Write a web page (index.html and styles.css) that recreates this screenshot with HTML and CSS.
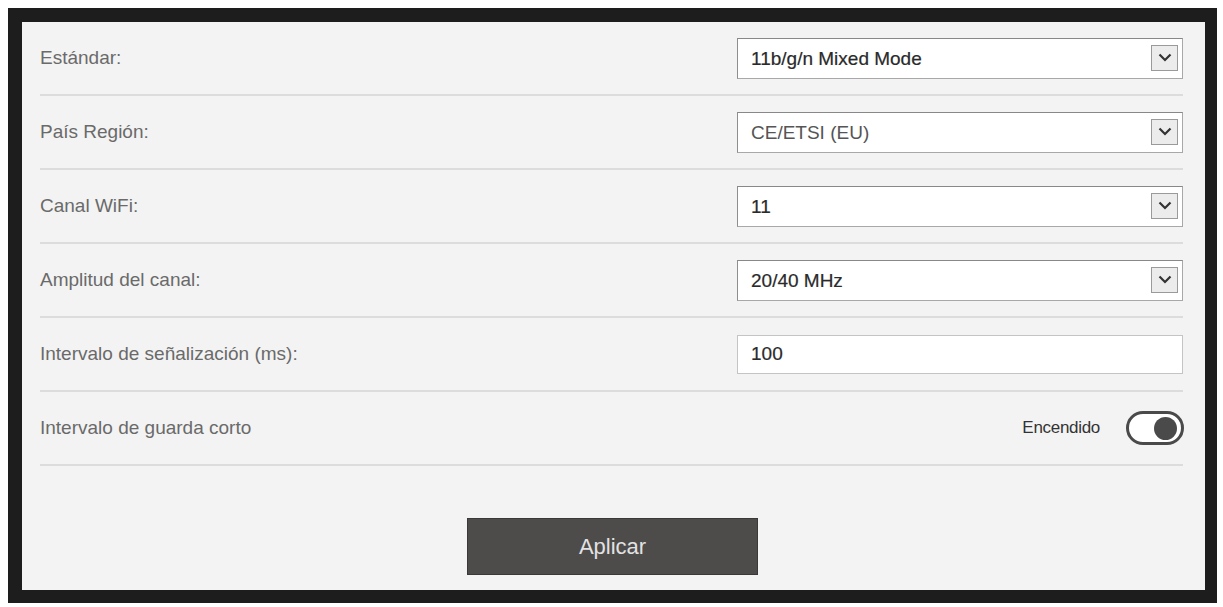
FILE: index.html
```html
<!DOCTYPE html>
<html lang="es">
<head>
    <meta charset="UTF-8">
    <meta name="viewport" content="width=device-width, initial-scale=1.0" />
    <title>Configuración WiFi</title>
    <link rel="stylesheet" href="styles.css">
</head>
<body>
    <main class="frame">
        <form class="panel">
            <div class="row">
                <label for="standard">Estándar:</label>
                <div class="select">
                    <select id="standard" class="strong">
                        <option>11b/g/n Mixed Mode</option>
                    </select>
                    <span class="arrow"><svg width="14" height="9" viewBox="0 0 14 9"><path d="M1.5 1.5 L7 7 L12.5 1.5" fill="none" stroke="#333" stroke-width="2.2"/></svg></span>
                </div>
            </div>
            <div class="row">
                <label for="region">País Región:</label>
                <div class="select">
                    <select id="region">
                        <option>CE/ETSI (EU)</option>
                    </select>
                    <span class="arrow"><svg width="14" height="9" viewBox="0 0 14 9"><path d="M1.5 1.5 L7 7 L12.5 1.5" fill="none" stroke="#333" stroke-width="2.2"/></svg></span>
                </div>
            </div>
            <div class="row">
                <label for="channel">Canal WiFi:</label>
                <div class="select">
                    <select id="channel" class="strong">
                        <option>11</option>
                    </select>
                    <span class="arrow"><svg width="14" height="9" viewBox="0 0 14 9"><path d="M1.5 1.5 L7 7 L12.5 1.5" fill="none" stroke="#333" stroke-width="2.2"/></svg></span>
                </div>
            </div>
            <div class="row">
                <label for="width">Amplitud del canal:</label>
                <div class="select">
                    <select id="width" class="strong">
                        <option>20/40 MHz</option>
                    </select>
                    <span class="arrow"><svg width="14" height="9" viewBox="0 0 14 9"><path d="M1.5 1.5 L7 7 L12.5 1.5" fill="none" stroke="#333" stroke-width="2.2"/></svg></span>
                </div>
            </div>
            <div class="row">
                <label for="beacon">Intervalo de señalización (ms):</label>
                <input id="beacon" class="text strong" value="100">
            </div>
            <div class="row">
                <label>Intervalo de guarda corto</label>
                <div class="switch">
                    <span class="switch_label">Encendido</span>
                    <span class="toggle"><span class="knob"></span></span>
                </div>
            </div>
            <div class="actions">
                <button type="button">Aplicar</button>
            </div>
        </form>
    </main>
</body>
</html>
```

FILE: styles.css
```css
html {
    font-family: "Liberation Sans", Arial, sans-serif;
}

body {
    margin: 0;
    padding: 8px;
    background-color: white;
}

.frame {
    width: 1183px;
    border: 14px solid #1d1d1d;
    border-right-width: 12px;
    border-bottom-width: 13px;
}

.panel {
    display: flex;
    flex-direction: column;
    background-color: #f3f3f3;
    padding: 0 22px 15px 18px;
}

.row {
    display: grid;
    grid-template-columns: 1fr 446px;
    align-items: center;
    height: 72px;
    border-bottom: 2px solid #dcdcdc;
}

label {
    font-size: 19px;
    color: #6a6a6a;
}

.select {
    position: relative;
}

select,
.text {
    appearance: none;
    width: 100%;
    height: 41px;
    box-sizing: border-box;
    border: 1px solid #a8a8a8;
    border-top-color: #888;
    border-left-color: #8e8e8e;
    background-color: white;
    padding: 0 13px;
    font-family: inherit;
    font-size: 19px;
    color: #555;
    outline: none;
}

.text {
    height: 39px;
    border-color: #c4c4c4;
}

.strong {
    color: #2a2a2a;
    -webkit-text-stroke: 0.2px #2a2a2a;
}

.arrow {
    position: absolute;
    right: 5px;
    top: 7px;
    width: 27px;
    height: 26px;
    box-sizing: border-box;
    border: 1px solid #9a9a9a;
    background-color: #ececec;
    display: flex;
    align-items: center;
    justify-content: center;
    pointer-events: none;
}

.switch {
    display: flex;
    align-items: center;
    justify-content: flex-end;
    gap: 26px;
}

.switch_label {
    font-size: 17px;
    color: #333;
    letter-spacing: -0.3px;
}

.toggle {
    display: flex;
    align-items: center;
    justify-content: flex-end;
    width: 58px;
    height: 34px;
    box-sizing: border-box;
    border: 3px solid #4a4a4a;
    border-radius: 17px;
    background-color: white;
    padding-right: 4px;
    margin-right: -1px;
}

.knob {
    width: 23px;
    height: 23px;
    border-radius: 50%;
    background-color: #4a4a4a;
}

.actions {
    display: flex;
    justify-content: center;
    padding-top: 52px;
    padding-left: 2px;
}

button {
    width: 291px;
    height: 57px;
    border: 1px solid #3a3838;
    background-color: #4e4b4b;
    color: #e2e2e2;
    font-family: inherit;
    font-size: 22px;
    cursor: pointer;
}
```
